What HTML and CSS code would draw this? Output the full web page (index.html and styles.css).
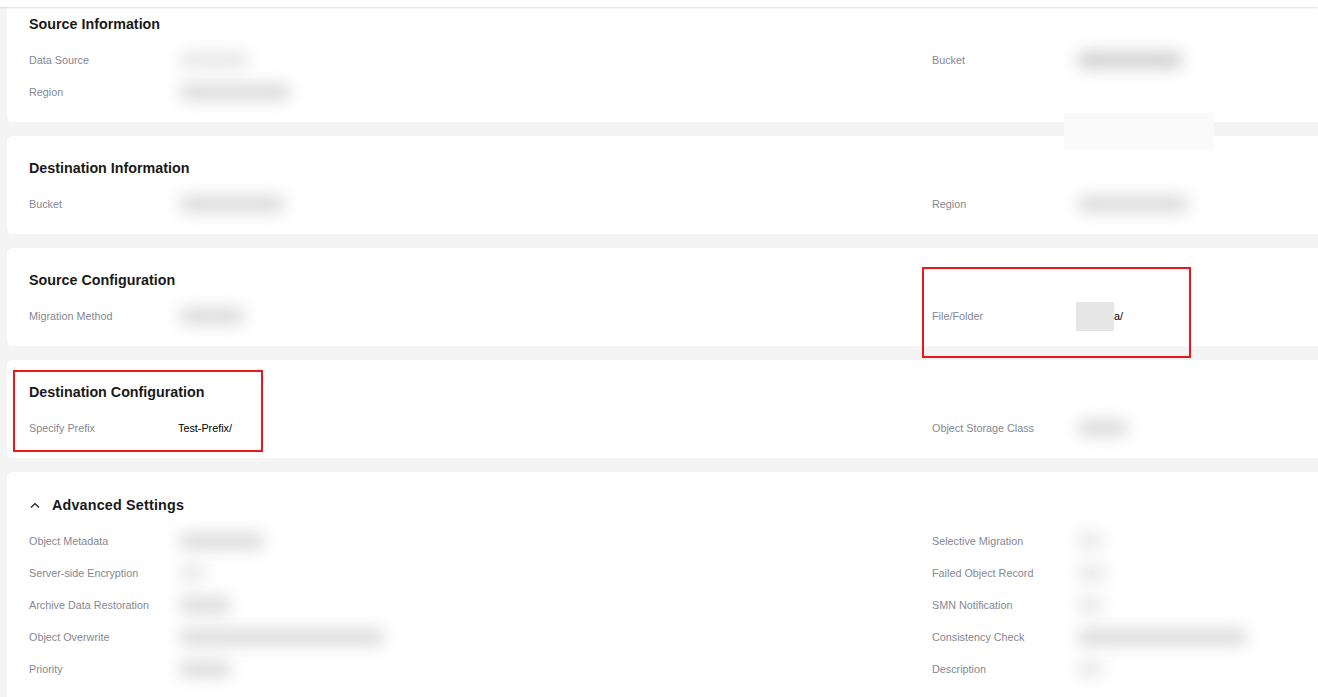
FILE: index.html
```html
<!DOCTYPE html>
<html lang="en">
  <head>
    <meta charset="UTF-8" />
    <meta name="viewport" content="width=device-width, initial-scale=1.0" />
    <title>Task Details</title>
    <link rel="stylesheet" href="styles.css">
  </head>
  <body>
    <div class="topbar"></div>
    <div class="page">
      <div class="card first">
        <h3 class="title">Source Information</h3>
        <div class="grid">
          <div class="item"><span class="label">Data Source</span><span class="blob b70 faint"></span></div>
          <div class="item"><span class="label">Bucket</span><span class="blob b100 dark"></span></div>
          <div class="item"><span class="label">Region</span><span class="blob b110"></span></div>
        </div>
      </div>

      <div class="card">
        <h3 class="title">Destination Information</h3>
        <div class="grid">
          <div class="item"><span class="label">Bucket</span><span class="blob b100"></span></div>
          <div class="item"><span class="label">Region</span><span class="blob b110"></span></div>
        </div>
      </div>

      <div class="card">
        <h3 class="title">Source Configuration</h3>
        <div class="grid">
          <div class="item"><span class="label">Migration Method</span><span class="blob b60"></span></div>
          <div class="item"><span class="label">File/Folder</span><span class="value"><span class="mask"></span>a/</span></div>
        </div>
      </div>

      <div class="card">
        <h3 class="title">Destination Configuration</h3>
        <div class="grid">
          <div class="item"><span class="label">Specify Prefix</span><span class="value">Test-Prefix/</span></div>
          <div class="item"><span class="label">Object Storage Class</span><span class="blob b40"></span></div>
        </div>
      </div>

      <div class="card last">
        <h3 class="title">
          <svg class="chevron" width="10" height="6" viewBox="0 0 10 6"><polyline points="1,5.5 5,1.5 9,5.5" fill="none" stroke="#191919" stroke-width="1.2"/></svg>
          Advanced Settings
        </h3>
        <div class="grid">
          <div class="item"><span class="label">Object Metadata</span><span class="blob b80"></span></div>
          <div class="item"><span class="label">Selective Migration</span><span class="blob b20 faint"></span></div>
          <div class="item"><span class="label">Server-side Encryption</span><span class="blob b20 faint"></span></div>
          <div class="item"><span class="label">Failed Object Record</span><span class="blob b24 faint"></span></div>
          <div class="item"><span class="label">Archive Data Restoration</span><span class="blob b40"></span></div>
          <div class="item"><span class="label">SMN Notification</span><span class="blob b20 faint"></span></div>
          <div class="item"><span class="label">Object Overwrite</span><span class="blob b200"></span></div>
          <div class="item"><span class="label">Consistency Check</span><span class="blob b160"></span></div>
          <div class="item"><span class="label">Priority</span><span class="blob b40"></span></div>
          <div class="item"><span class="label">Description</span><span class="blob b20 faint"></span></div>
        </div>
      </div>

      <div class="patch"></div>
      <div class="mark mark-folder"></div>
      <div class="mark mark-prefix"></div>
    </div>
  </body>
</html>
```

FILE: styles.css
```css
* {
  padding: 0;
  margin: 0;
  box-sizing: border-box;
}
html, body {
  width: 100%;
  height: 100%;
  overflow: hidden;
}
body {
  background: #f4f4f4;
  font-family: "Liberation Sans", Arial, sans-serif;
  font-size: 10.8px;
  color: #191919;
}
.topbar {
  position: fixed;
  top: 0;
  left: 0;
  right: 0;
  height: 7px;
  background: #fff;
  box-shadow: 0 1px 2px rgba(0, 0, 0, 0.12);
  z-index: 5;
}
.page {
  position: relative;
  padding-left: 7px;
  display: flex;
  flex-direction: column;
  gap: 14px;
  margin-top: -8px;
}
.card {
  background: #fff;
  border-radius: 6px 0 0 6px;
  padding: 22px 0 14px 22px;
  height: 98px;
}
.card.first {
  height: 130px;
}
.card.last {
  height: 260px;
  padding-top: 23px;
}
.title {
  font-size: 14.3px;
  font-weight: bold;
  line-height: 20px;
  height: 30px;
  display: flex;
  align-items: flex-start;
}
.last .title {
  letter-spacing: 0.2px;
}
.chevron {
  margin: 7px 12px 0 1px;
}
.grid {
  display: grid;
  grid-template-columns: 903px 1fr;
}
.item {
  display: flex;
  align-items: center;
  height: 32px;
}
.label {
  width: 148px;
  flex-shrink: 0;
  color: #858891;
}
.item:nth-child(even) .label {
  width: 143px;
}
.value {
  display: flex;
  align-items: center;
  color: #000;
  padding-left: 1px;
}
.mask {
  width: 38px;
  height: 29px;
  background: #e6e6e6;
}
.blob {
  height: 16px;
  margin-left: 2px;
  background: #d9d9d9;
  border-radius: 8px;
  filter: blur(8px);
}
.blob.dark {
  background: #cdcdcd;
}
.blob.faint {
  background: #e6e6e6;
}
.b20 { width: 26px; }
.b24 { width: 30px; }
.b40 { width: 52px; }
.b60 { width: 66px; }
.b70 { width: 70px; }
.b80 { width: 86px; }
.b100 { width: 106px; }
.b110 { width: 112px; }
.b160 { width: 170px; }
.b200 { width: 206px; }
.patch {
  position: absolute;
  left: 1064px;
  top: 121px;
  width: 150px;
  height: 37px;
  background: #fafafa;
}
.mark {
  position: absolute;
  border: 2px solid #f2141b;
}
.mark-folder {
  left: 922px;
  top: 275px;
  width: 269px;
  height: 91px;
}
.mark-prefix {
  left: 13px;
  top: 378px;
  width: 250px;
  height: 82px;
}
```
